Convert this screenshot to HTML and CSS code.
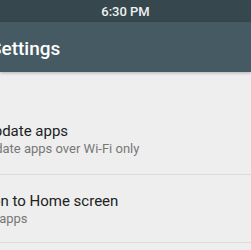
FILE: index.html
```html
<!DOCTYPE html>
<html>
<head>
    <meta charset="utf-8">
    <title>Settings</title>
    <link rel="stylesheet" href="styles.css">
</head>
<body>
<div class="status_bar">6:30 PM</div>
<div class="toolbar">
    <div class="toolbar_title">Settings</div>
</div>
<div class="pref_list">
    <div class="pref_item pref_first">
        <div class="pref_title">Auto-update apps</div>
        <div class="pref_summary">Auto-update apps over Wi-Fi only</div>
    </div>
    <div class="pref_item">
        <div class="pref_title">Add icon to Home screen</div>
        <div class="pref_summary">For new apps</div>
    </div>
    <div class="pref_item">
        <div class="pref_title">Notifications</div>
        <div class="pref_summary">Show update notifications</div>
    </div>
</div>
</body>
</html>
```

FILE: styles.css
```css
*{margin:0;padding:0;box-sizing:border-box;}
html,body{
    width: 251px;
    height: 250px;
    overflow: hidden;
    background: #eeeeee;
    font-family: Roboto, "Liberation Sans", sans-serif;
}
.status_bar{
    height: 22px;
    line-height: 24px;
    background: #36474e;
    color: #eef1f2;
    font-size: 13px;
    font-weight: 500;
    text-align: center;
}
.toolbar{
    height: 50px;
    background: #455a63;
    display: flex;
    align-items: center;
    box-shadow: 0 1px 3px rgba(0,0,0,0.25);
    position: relative;
}
.toolbar_title{
    margin-left: -10px;
    margin-top: 3px;
    color: #ffffff;
    font-size: 19px;
    font-weight: 500;
}
.pref_list{
    padding-top: 34px;
}
.pref_item{
    height: 68px;
    margin-left: -50px;
    padding-top: 16px;
    border-top: 1px solid #dcdcdc;
}
.pref_first{
    border-top: none;
    padding-top: 15px;
}
.pref_title{
    font-size: 15px;
    color: #212121;
    line-height: 20px;
    white-space: nowrap;
}
.pref_summary{
    font-size: 13px;
    color: #777777;
    line-height: 16px;
    white-space: nowrap;
}
```
